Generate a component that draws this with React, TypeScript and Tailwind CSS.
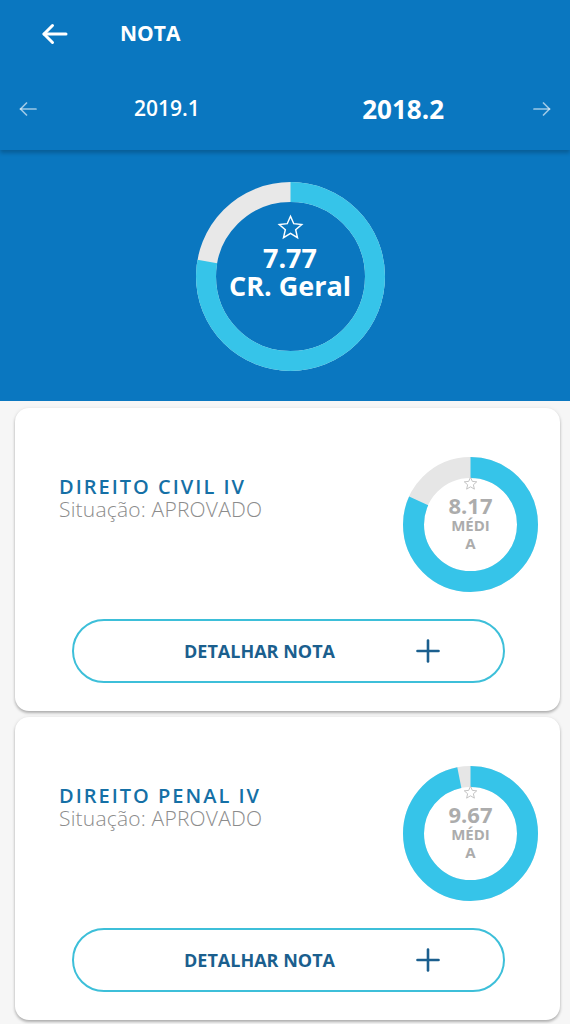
import React from "react";

const CYAN = "#36c4e9";

function Star({ size, color, strokeWidth = 1.4, fill = "none" }: { size: number; color: string; strokeWidth?: number; fill?: string }) {
  return (
    <svg width={size} height={size} viewBox="0 0 24 24">
      <polygon
        points="12,2 14.9,8.6 22,9.3 16.6,14 18.2,21 12,17.3 5.8,21 7.4,14 2,9.3 9.1,8.6"
        fill={fill}
        stroke={color}
        strokeWidth={strokeWidth}
        strokeLinejoin="miter"
      />
    </svg>
  );
}

function Ring({ size, thickness, fraction, track }: { size: number; thickness: number; fraction: number; track: string }) {
  const r = (size - thickness) / 2;
  const c = 2 * Math.PI * r;
  return (
    <svg width={size} height={size} viewBox={`0 0 ${size} ${size}`} className="block">
      <circle cx={size / 2} cy={size / 2} r={r} fill="none" stroke={track} strokeWidth={thickness} />
      <circle
        cx={size / 2}
        cy={size / 2}
        r={r}
        fill="none"
        stroke={CYAN}
        strokeWidth={thickness}
        strokeDasharray={`${c * fraction} ${c}`}
        transform={`rotate(-90 ${size / 2} ${size / 2})`}
      />
    </svg>
  );
}

function ArrowBig() {
  return (
    <svg width="27" height="22" viewBox="0 0 27 22" fill="none" stroke="white" strokeWidth="3" strokeLinecap="round" strokeLinejoin="round">
      <path d="M25 11H3" />
      <path d="M11.5 2.5L3 11l8.5 8.5" />
    </svg>
  );
}

function ArrowSmall({ dir }: { dir: "left" | "right" }) {
  return (
    <svg
      width="18"
      height="14"
      viewBox="0 0 18 14"
      fill="none"
      stroke="rgba(255,255,255,0.6)"
      strokeWidth="1.7"
      strokeLinecap="round"
      strokeLinejoin="round"
      className={dir === "right" ? "rotate-180" : ""}
    >
      <path d="M17 7H1.5" />
      <path d="M7.5 1L1.5 7l6 6" />
    </svg>
  );
}

function Plus() {
  return (
    <svg width="24" height="24" viewBox="0 0 24 24" fill="none" stroke="#1b5f8e" strokeWidth="2.6" strokeLinecap="round">
      <path d="M12 1.5v21" />
      <path d="M1.5 12h21" />
    </svg>
  );
}

function Card({ title, grade, fraction }: { title: string; grade: string; fraction: number }) {
  return (
    <div className="bg-white rounded-[14px] shadow-[0_2px_3px_rgba(0,0,0,0.28),0_0_4px_rgba(0,0,0,0.06)] flex flex-col pt-[49px] pb-[28px]">
      <div className="flex items-start">
        <div className="pl-[44px] mt-[19px] flex flex-col">
          <div className="text-[20px] leading-[22px] font-semibold tracking-[2px] text-[#1570a6]">{title}</div>
          <div className="text-[21px] leading-[23px] font-light tracking-[0.2px] text-[#8c8c8c]">Situação: APROVADO</div>
        </div>
        <div className="ml-auto mr-[22px] relative w-[135px] h-[135px]">
          <Ring size={135} thickness={21} fraction={fraction} track="#e6e6e6" />
          <div className="absolute left-0 right-0 top-[19px] flex flex-col items-center">
            <Star size={15} color="#c4c4c4" strokeWidth={1.6} fill="white" />
            <div className="mt-[3px] text-[22px] leading-[22px] font-bold text-[#acacac]">{grade}</div>
            <div className="w-[44px] text-center break-all text-[15px] leading-[18px] font-bold text-[#acacac]">MÉDIA</div>
          </div>
        </div>
      </div>
      <div className="mt-[27px] ml-[57px] mr-[55px] h-[64px] rounded-full border-[2.5px] border-[#3dbfd9] flex items-center pl-[110px]">
        <span className="text-[18px] font-bold text-[#1b5f8e]">DETALHAR NOTA</span>
        <span className="ml-[81px] flex">
          <Plus />
        </span>
      </div>
    </div>
  );
}

export default function App() {
  return (
    <div className="w-[570px] min-h-[1024px] bg-[#f6f6f6] font-['Open_Sans',sans-serif] overflow-hidden">
      <div className="bg-[#0a77c0]">
        <div className="relative z-10 bg-[#0a77c0] shadow-[0_3px_4px_rgba(0,0,0,0.22)]">
          <div className="h-[68px] flex items-center pl-[41px]">
            <ArrowBig />
            <span className="ml-[52px] text-[21px] font-bold text-white">NOTA</span>
          </div>
          <div className="h-[82px] flex items-center px-[19px]">
            <ArrowSmall dir="left" />
            <span className="ml-[97px] text-[21px] font-semibold text-white">2019.1</span>
            <span className="ml-auto mr-[89px] text-[26px] font-bold text-white">2018.2</span>
            <ArrowSmall dir="right" />
          </div>
        </div>
        <div className="h-[251px] flex justify-center pt-[32px] pl-[10px]">
          <div className="relative w-[189px] h-[189px]">
            <Ring size={189} thickness={20} fraction={0.777} track="#e8e8e8" />
            <div className="absolute left-0 right-0 top-[32px] flex flex-col items-center">
              <Star size={27} color="white" strokeWidth={1.3} />
              <div className="mt-[3px] text-[27px] leading-[28px] font-bold text-white">7.77</div>
              <div className="text-[27px] leading-[28px] font-bold text-white">CR. Geral</div>
            </div>
          </div>
        </div>
      </div>
      <div className="flex flex-col gap-[6px] pl-[15px] pr-[10px] pt-[7px] pb-[4px]">
        <Card title="DIREITO CIVIL IV" grade="8.17" fraction={0.817} />
        <Card title="DIREITO PENAL IV" grade="9.67" fraction={0.967} />
      </div>
    </div>
  );
}
